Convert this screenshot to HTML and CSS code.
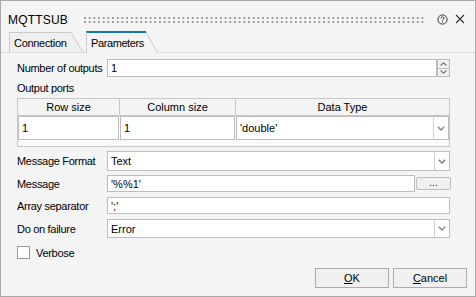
FILE: index.html
```html
<!DOCTYPE html>
<html lang="en">
<head>
  <meta charset="UTF-8" />
  <title>MQTTSUB</title>
  <link rel="stylesheet" href="styles.css">
</head>
<body>
  <div class="dialog">
    <!-- Title bar -->
    <div class="titlebar">
      <span class="title">MQTTSUB</span>
      <span class="grip"></span>
      <svg class="tb-icon" width="11" height="11" viewBox="0 0 11 11">
        <circle cx="5.5" cy="5.5" r="4.6" fill="none" stroke="#333" stroke-width="1"/>
        <path d="M3.8 4.3 C3.8 2.6 7.2 2.6 7.2 4.2 C7.2 5.3 5.5 5.3 5.5 6.6" fill="none" stroke="#333" stroke-width="1"/>
        <rect x="5" y="7.5" width="1" height="1" fill="#333"/>
      </svg>
      <svg class="tb-icon close" width="10" height="10" viewBox="0 0 10 10">
        <path d="M1 1 L9 9 M9 1 L1 9" stroke="#333" stroke-width="1.1"/>
      </svg>
    </div>

    <!-- Tabs -->
    <div class="tabs">
      <div class="tab">
        <span class="tab-body">Connection</span>
        <svg class="tab-edge" width="12" height="20" viewBox="0 0 12 20">
          <polygon points="0,0 0,20 12,20" fill="#efefef"/>
          <line x1="0" y1="0.5" x2="12" y2="20" stroke="#c9c9c9" stroke-width="1"/>
        </svg>
      </div>
      <div class="tab active">
        <span class="tab-body">Parameters</span>
        <svg class="tab-edge" width="11" height="22" viewBox="0 0 11 22">
          <polygon points="0,0 0,22 11,22" fill="#f4f4f4"/>
          <line x1="0" y1="1" x2="11" y2="21" stroke="#c9c9c9" stroke-width="1"/>
        </svg>
      </div>
    </div>

    <!-- Parameters page -->
    <div class="page">
      <div class="form-row r-outputs">
        <label>Number of outputs</label>
        <div class="field">
          <div class="box">1</div>
          <div class="spinner">
            <span class="spin-btn"><svg width="7" height="4" viewBox="0 0 7 4"><path d="M0.5 3.5 L3.5 0.8 L6.5 3.5" fill="none" stroke="#7a7a7a" stroke-width="1.2"/></svg></span>
            <span class="spin-btn"><svg width="7" height="4" viewBox="0 0 7 4"><path d="M0.5 0.5 L3.5 3.2 L6.5 0.5" fill="none" stroke="#7a7a7a" stroke-width="1.2"/></svg></span>
          </div>
        </div>
      </div>

      <div class="section-label">Output ports</div>
      <div class="grid">
        <div class="gh">Row size</div>
        <div class="gh">Column size</div>
        <div class="gh last">Data Type</div>
        <div class="gc"><span class="cell-box">1</span></div>
        <div class="gc"><span class="cell-box">1</span></div>
        <div class="gc last">
          <span class="cell-box combo">'double'
            <span class="drop"><svg width="8" height="5" viewBox="0 0 8 5"><path d="M0.8 0.8 L4 4 L7.2 0.8" fill="none" stroke="#8a8a8a" stroke-width="1.5"/></svg></span>
          </span>
        </div>
      </div>

      <div class="form-row r-format">
        <label>Message Format</label>
        <div class="box combo">Text
          <span class="drop"><svg width="8" height="5" viewBox="0 0 8 5"><path d="M0.8 0.8 L4 4 L7.2 0.8" fill="none" stroke="#7a7a7a" stroke-width="1.5"/></svg></span>
        </div>
      </div>

      <div class="form-row r-message">
        <label>Message</label>
        <div class="field">
          <div class="box">'%%1'</div>
          <button class="dots-btn">...</button>
        </div>
      </div>

      <div class="form-row r-sep">
        <label>Array separator</label>
        <div class="box">';'</div>
      </div>

      <div class="form-row r-fail">
        <label>Do on failure</label>
        <div class="box combo">Error
          <span class="drop"><svg width="8" height="5" viewBox="0 0 8 5"><path d="M0.8 0.8 L4 4 L7.2 0.8" fill="none" stroke="#8a8a8a" stroke-width="1.5"/></svg></span>
        </div>
      </div>

      <div class="check-row">
        <span class="checkbox"></span>
        <span>Verbose</span>
      </div>
    </div>

    <!-- Footer buttons -->
    <div class="footer">
      <button class="btn"><u>O</u>K</button>
      <button class="btn"><u>C</u>ancel</button>
    </div>
  </div>
</body>
</html>
```

FILE: styles.css
```css
* {
  box-sizing: border-box;
}
body {
  margin: 0;
  font-family: 'Liberation Sans', Arial, sans-serif;
  font-size: 11px;
  color: #000;
  background: #f4f4f4;
}
.dialog {
  width: 476px;
  height: 297px;
  border: 1px solid #a9a9a9;
  background: #f4f4f4;
  display: flex;
  flex-direction: column;
}
.titlebar {
  height: 30px;
  display: flex;
  align-items: center;
  padding: 8px 10px 0 7px;
}
.title {
  font-size: 12px;
  letter-spacing: 0.2px;
}
.grip {
  flex: 1;
  height: 6px;
  margin: 0 11px 0 16px;
  background:
    linear-gradient(90deg, #9c9c9c 2px, transparent 2px) 0 0 / 4.7px 2px repeat-x,
    linear-gradient(90deg, #9c9c9c 2px, transparent 2px) 0 4px / 4.7px 2px repeat-x;
}
.tb-icon {
  display: block;
  margin-top: -2px;
}
.tb-icon.close {
  margin-left: 7px;
}
.tabs {
  height: 22px;
  display: flex;
  align-items: flex-end;
  padding-left: 8px;
  border-bottom: 1px solid #dadada;
}
.tab {
  display: flex;
  align-items: stretch;
  height: 20px;
}
.tab-body {
  display: flex;
  align-items: center;
  padding: 1px 0 0 4px;
  width: 62px;
  letter-spacing: -0.3px;
  white-space: nowrap;
  border-left: 1px solid #c9c9c9;
  border-top: 1px solid #c9c9c9;
  background: #efefef;
}
.tab-edge {
  display: block;
}
.tab.active {
  height: 22px;
  margin-left: 3px;
  margin-bottom: -1px;
}
.tab.active .tab-body {
  width: 60px;
  border-top: 2px solid #1677a8;
  background: #f4f4f4;
  padding: 0 0 1px 4px;
  letter-spacing: -0.4px;
}
.page {
  padding: 6px 25px 0 15px;
}
.form-row {
  display: grid;
  grid-template-columns: 91px 1fr;
  align-items: center;
}
.form-row label {
  padding-left: 1px;
  letter-spacing: -0.3px;
}
.field {
  display: flex;
  height: 100%;
}
.box {
  position: relative;
  height: 100%;
  flex: 1;
  background: #fff;
  border: 1px solid #bdbdbd;
  display: flex;
  align-items: center;
  padding-left: 3px;
}
.r-outputs {
  height: 18px;
}
.spinner {
  width: 13px;
  display: flex;
  flex-direction: column;
}
.spin-btn {
  flex: 1;
  display: flex;
  align-items: center;
  justify-content: center;
  border: 1px solid #bdbdbd;
  background: #f0f0f0;
}
.spin-btn + .spin-btn {
  border-top: none;
}
.section-label {
  margin-top: 4px;
  height: 14px;
  line-height: 14px;
  padding-left: 1px;
  letter-spacing: -0.3px;
}
.grid {
  margin-top: 3px;
  margin-left: 1px;
  height: 49px;
  border: 1px solid #c8c8c8;
  background: #f9f9f9;
  display: grid;
  grid-template-columns: 102px 116px 1fr;
  grid-template-rows: 17px 24px;
}
.gh {
  display: flex;
  align-items: center;
  justify-content: center;
  background: #f4f4f4;
  border-right: 1px solid #c8c8c8;
  border-bottom: 1px solid #c8c8c8;
}
.gh.last,
.gc.last {
  border-right: none;
}
.gc {
  display: flex;
  padding-right: 1px;
}
.gc.last {
  padding-right: 0;
}
.cell-box {
  position: relative;
  flex: 1;
  display: flex;
  align-items: center;
  padding-left: 3px;
  background: #fff;
  border: 1px solid #bdbdbd;
}
.combo {
  padding-right: 15px;
}
.drop {
  position: absolute;
  top: 0;
  right: 0;
  bottom: 0;
  width: 15px;
  border-left: 1px solid #d0d0d0;
  display: flex;
  align-items: center;
  justify-content: center;
}
.r-format {
  margin-top: 4px;
  height: 20px;
}
.r-message {
  margin-top: 4px;
  height: 17px;
}
.r-message .box {
  flex: none;
  width: 308px;
}
.dots-btn {
  width: 35px;
  height: 13px;
  margin: 2px 0 0 1px;
  padding: 0 0 3px;
  font-family: inherit;
  font-size: 10px;
  line-height: 9px;
  color: #222;
  background: #f0f0f0;
  border: 1px solid #bdbdbd;
  border-radius: 2px;
}
.r-sep {
  margin-top: 5px;
  height: 17px;
}
.r-fail {
  margin-top: 5px;
  height: 19px;
}
.check-row {
  margin-top: 8px;
  padding-left: 1px;
  display: flex;
  align-items: center;
  gap: 6px;
  letter-spacing: -0.3px;
}
.checkbox {
  width: 13px;
  height: 13px;
  background: #fff;
  border: 1px solid #9a9a9a;
}
.footer {
  margin-top: auto;
  display: flex;
  justify-content: flex-end;
  gap: 4px;
  padding: 0 8px 8px 0;
}
.btn {
  width: 74px;
  height: 20px;
  font-family: inherit;
  font-size: 11px;
  color: #000;
  background: #f0f0f0;
  border: 1px solid #adadad;
  padding: 0;
}
```
